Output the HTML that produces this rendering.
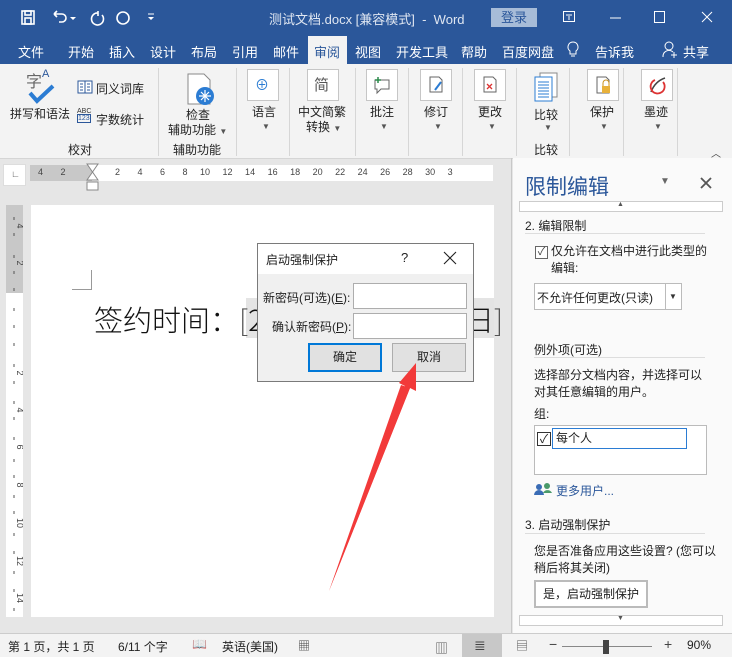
<!DOCTYPE html>
<html><head><meta charset="utf-8"><style>
*{margin:0;padding:0;box-sizing:border-box}
body{width:732px;height:657px;overflow:hidden;position:relative;font-family:"Liberation Sans","Noto Sans CJK SC",sans-serif;font-size:12px;color:#222;background:#e6e6e6}
.a{position:absolute;white-space:nowrap}
.w{color:#fff}
.ib{position:absolute;width:32px;height:32px;border:1px solid #c6c6c6;background:#fff}
.lbl{position:absolute;font-size:12px;text-align:center;white-space:nowrap}
.sep{position:absolute;top:68px;width:1px;height:88px;background:#d6d6d6}
.dd{font-size:8px;color:#555}
</style></head><body>
<div class="a" style="left:0;top:0;width:732px;height:64px;background:#2b579a"></div>
<svg class="a" style="left:20px;top:8px" width="140" height="20"><g fill="none" stroke="#fff" stroke-width="1.6"><rect x="2" y="3" width="12" height="13"/><rect x="5" y="3" width="6" height="4"/><rect x="5" y="10" width="6" height="6"/><path d="M34 6h8a4 4 0 0 1 0 8h-3M34 6l3-3M34 6l3 3"/><path d="M78 5a6 6 0 1 0 4 2M78 3v5"/><circle cx="103" cy="10" r="6"/></g><path d="M50 9l3 3 3-3z M128 9l3 3 3-3z" fill="#fff"/><path d="M128 6h6" stroke="#fff"/></svg>
<div class="a" style="left:269px;top:9px;font-size:13px;color:#dfe6f1">测试文档.docx [兼容模式]&nbsp; - &nbsp;Word</div>
<div class="a" style="left:491px;top:8px;width:46px;height:19px;background:#a7bcd8;color:#2b579a;font-size:13px;text-align:center;line-height:19px">登录</div>
<svg class="a" style="left:560px;top:8px" width="172" height="20"><g fill="none" stroke="#fff" stroke-width="1"><rect x="3.5" y="3.5" width="11" height="10"/><path d="M6 7h6M9 12V8"/><path d="M50 10h11"/><rect x="94.5" y="3.5" width="10" height="11"/><path d="M142 4l10 10M152 4l-10 10"/></g></svg>
<div class="a w" style="left:18px;top:42px;font-size:13px">文件</div>
<div class="a w" style="left:68px;top:42px;font-size:13px">开始</div>
<div class="a w" style="left:109px;top:42px;font-size:13px">插入</div>
<div class="a w" style="left:150px;top:42px;font-size:13px">设计</div>
<div class="a w" style="left:191px;top:42px;font-size:13px">布局</div>
<div class="a w" style="left:232px;top:42px;font-size:13px">引用</div>
<div class="a w" style="left:273px;top:42px;font-size:13px">邮件</div>
<div class="a" style="left:308px;top:36px;width:39px;height:29px;background:#f3f3f3"></div>
<div class="a" style="left:314px;top:42px;font-size:13px;color:#2b579a">审阅</div>
<div class="a w" style="left:355px;top:42px;font-size:13px">视图</div>
<div class="a w" style="left:396px;top:42px;font-size:13px">开发工具</div>
<div class="a w" style="left:461px;top:42px;font-size:13px">帮助</div>
<div class="a w" style="left:502px;top:42px;font-size:13px">百度网盘</div>
<svg class="a" style="left:566px;top:40px" width="14" height="20"><path d="M7 2a5 5 0 0 0-3 9v3h6v-3a5 5 0 0 0-3-9zM5 16h4" fill="none" stroke="#fff"/></svg>
<div class="a w" style="left:595px;top:42px;font-size:13px">告诉我</div>
<svg class="a" style="left:662px;top:40px" width="16" height="20"><circle cx="7" cy="6" r="4" fill="none" stroke="#fff"/><path d="M1 17a6 6 0 0 1 10-5M12 12v6M9 15h6" fill="none" stroke="#fff"/></svg>
<div class="a w" style="left:683px;top:42px;font-size:13px">共享</div>
<div class="a" style="left:0;top:64px;width:732px;height:95px;background:#f3f3f3;border-bottom:1px solid #d5d5d5"></div>
<div class="a" style="left:26px;top:68px;font-size:16px;color:#666">字<span style="font-size:11px;color:#2b579a;vertical-align:top">A</span></div>
<svg class="a" style="left:27px;top:84px" width="30" height="20"><path d="M3 9l7 8L26 2" fill="none" stroke="#2b7cd3" stroke-width="4"/></svg>
<div class="lbl" style="left:10px;top:105px">拼写和语法</div>
<svg class="a" style="left:77px;top:80px" width="16" height="14"><rect x="1" y="1" width="14" height="12" fill="#fff" stroke="#2b579a"/><path d="M8 1v12M3 4h3M3 7h3M3 10h3M10 4h3M10 7h3M10 10h3" stroke="#2b579a"/></svg>
<div class="lbl" style="left:96px;top:80px">同义词库</div>
<div class="a" style="left:77px;top:108px;font-size:7px;color:#333;line-height:7px">ABC<br><span style="border:1px solid #2b579a;color:#2b579a">123</span></div>
<div class="lbl" style="left:96px;top:111px">字数统计</div>
<div class="lbl" style="left:68px;top:141px">校对</div>
<div class="sep" style="left:158px"></div>
<svg class="a" style="left:186px;top:73px" width="32" height="34"><path d="M2 1h16l6 6v24H2z" fill="#fff" stroke="#888"/><circle cx="19" cy="23" r="9" fill="#2b7cd3"/><path d="M19 17v12M13 23h12M15 19l8 8M23 19l-8 8" stroke="#fff" stroke-width="1.2"/></svg>
<div class="lbl" style="left:186px;top:106px">检查</div>
<div class="lbl" style="left:168px;top:121px">辅助功能 <span class="dd">▼</span></div>
<div class="lbl" style="left:173px;top:141px">辅助功能</div>
<div class="sep" style="left:236px"></div>
<div class="ib" style="left:247px;top:69px"></div><div class="a" style="left:255px;top:75px;color:#2b7cd3;font-size:14px">⊕</div>
<div class="lbl" style="left:252px;top:103px">语言</div><div class="lbl dd" style="left:262px;top:122px">▼</div>
<div class="sep" style="left:289px"></div>
<div class="ib" style="left:307px;top:69px"></div><div class="a" style="left:314px;top:74px;color:#555;font-size:15px">简</div>
<div class="lbl" style="left:298px;top:103px">中文简繁</div>
<div class="lbl" style="left:306px;top:118px">转换 <span class="dd">▼</span></div>
<div class="sep" style="left:355px"></div>
<div class="ib" style="left:366px;top:69px"></div><svg class="a" style="left:372px;top:75px" width="20" height="20"><path d="M3 5h14v9H9l-4 4v-4H3z" fill="none" stroke="#666"/><path d="M6 2v6M3 5h6" stroke="#2a8a4a" stroke-width="1.5"/></svg>
<div class="lbl" style="left:370px;top:103px">批注</div><div class="lbl dd" style="left:380px;top:122px">▼</div>
<div class="sep" style="left:408px"></div>
<div class="ib" style="left:420px;top:69px"></div><svg class="a" style="left:427px;top:75px" width="20" height="20"><path d="M3 2h9l3 3v12H3z" fill="none" stroke="#666"/><path d="M14 7l-6 8" stroke="#2b7cd3" stroke-width="2"/></svg>
<div class="lbl" style="left:424px;top:103px">修订</div><div class="lbl dd" style="left:434px;top:122px">▼</div>
<div class="sep" style="left:462px"></div>
<div class="ib" style="left:474px;top:69px"></div><svg class="a" style="left:481px;top:75px" width="20" height="20"><path d="M3 2h9l3 3v12H3z" fill="none" stroke="#666"/><path d="M6 9l5 5M11 9l-5 5" stroke="#d33" stroke-width="1.3"/></svg>
<div class="lbl" style="left:478px;top:103px">更改</div><div class="lbl dd" style="left:488px;top:122px">▼</div>
<div class="sep" style="left:516px"></div>
<svg class="a" style="left:532px;top:72px" width="30" height="32"><rect x="8" y="1" width="17" height="24" fill="#fff" stroke="#888"/><rect x="3" y="5" width="17" height="24" fill="#fff" stroke="#2b7cd3"/><path d="M6 10h11M6 13h11M6 16h11M6 19h11M6 22h11M6 25h11" stroke="#2b7cd3"/></svg>
<div class="lbl" style="left:534px;top:106px">比较</div><div class="lbl dd" style="left:544px;top:123px">▼</div>
<div class="lbl" style="left:534px;top:141px">比较</div>
<div class="sep" style="left:569px"></div>
<div class="ib" style="left:587px;top:69px"></div><svg class="a" style="left:594px;top:75px" width="20" height="22"><path d="M3 2h9l3 3v13H3z" fill="none" stroke="#666"/><rect x="8" y="11" width="8" height="7" fill="#e8b13a"/><path d="M9 11V8a3 3 0 0 1 6 0v3" fill="none" stroke="#c9901a"/></svg>
<div class="lbl" style="left:590px;top:103px">保护</div><div class="lbl dd" style="left:600px;top:122px">▼</div>
<div class="sep" style="left:623px"></div>
<div class="ib" style="left:641px;top:69px"></div><svg class="a" style="left:647px;top:74px" width="22" height="22"><path d="M4 18c3-8 8-12 14-14" fill="none" stroke="#444" stroke-width="1.5"/><path d="M8 6a7 7 0 1 0 8 2" fill="none" stroke="#d33" stroke-width="1.8"/></svg>
<div class="lbl" style="left:644px;top:103px">墨迹</div><div class="lbl dd" style="left:654px;top:122px">▼</div>
<div class="sep" style="left:677px"></div>
<div class="a" style="left:711px;top:145px;font-size:10px;color:#444">︿</div>
<div class="a" style="left:3px;top:164px;width:23px;height:22px;background:#fff;border:1px solid #ddd"></div>
<div class="a" style="left:11px;top:169px;font-size:9px;color:#555">∟</div>
<div class="a" style="left:30px;top:165px;width:463px;height:16px;background:#fff"></div>
<div class="a" style="left:30px;top:165px;width:62px;height:16px;background:#c8c8c8"></div>
<div class="a" style="left:38px;top:167px;font-size:9px;color:#444">4&nbsp;&nbsp;&nbsp;&nbsp;&nbsp;&nbsp;&nbsp;2</div>
<div class="a" style="left:115px;top:167px;font-size:9px;color:#444">2&nbsp;&nbsp;&nbsp;&nbsp;&nbsp;&nbsp;&nbsp;4&nbsp;&nbsp;&nbsp;&nbsp;&nbsp;&nbsp;&nbsp;6&nbsp;&nbsp;&nbsp;&nbsp;&nbsp;&nbsp;&nbsp;8&nbsp;&nbsp;&nbsp;&nbsp;&nbsp;10&nbsp;&nbsp;&nbsp;&nbsp;&nbsp;12&nbsp;&nbsp;&nbsp;&nbsp;&nbsp;14&nbsp;&nbsp;&nbsp;&nbsp;&nbsp;16&nbsp;&nbsp;&nbsp;&nbsp;&nbsp;18&nbsp;&nbsp;&nbsp;&nbsp;&nbsp;20&nbsp;&nbsp;&nbsp;&nbsp;&nbsp;22&nbsp;&nbsp;&nbsp;&nbsp;&nbsp;24&nbsp;&nbsp;&nbsp;&nbsp;&nbsp;26&nbsp;&nbsp;&nbsp;&nbsp;&nbsp;28&nbsp;&nbsp;&nbsp;&nbsp;&nbsp;30&nbsp;&nbsp;&nbsp;&nbsp;&nbsp;3</div>
<svg class="a" style="left:86px;top:163px" width="14" height="28"><path d="M1 1h11L6.5 9zM6.5 9L1 17h11z M1 19h11v8H1z" fill="#fff" stroke="#888"/></svg>
<div class="a" style="left:6px;top:205px;width:17px;height:412px;background:#fff"></div>
<div class="a" style="left:6px;top:205px;width:17px;height:88px;background:#c8c8c8"></div>
<svg class="a" style="left:6px;top:205px" width="17" height="412"><g stroke="#555"><path d="M8 12v3M8 28v3M8 50v3M8 66v3M8 83v3M8 103v3M8 120v3M8 138v3M8 159v3M8 176v3M8 196v3M8 212v3M8 232v3M8 254v3M8 270v3M8 290v3M8 306v3M8 328v3M8 346v3M8 366v3M8 384v3M8 403v3"/></g><g font-size="9" fill="#444" text-anchor="middle" font-family="Liberation Sans"><text transform="translate(11,21) rotate(90)">4</text><text transform="translate(11,58) rotate(90)">2</text><text transform="translate(11,168) rotate(90)">2</text><text transform="translate(11,205) rotate(90)">4</text><text transform="translate(11,242) rotate(90)">6</text><text transform="translate(11,280) rotate(90)">8</text><text transform="translate(11,318) rotate(90)">10</text><text transform="translate(11,356) rotate(90)">12</text><text transform="translate(11,393) rotate(90)">14</text></g></svg>
<div class="a" style="left:31px;top:205px;width:463px;height:412px;background:#fff"></div>
<div class="a" style="left:72px;top:270px;width:20px;height:20px;border-right:1px solid #999;border-bottom:1px solid #999"></div>
<div class="a" style="left:246px;top:298px;width:248px;height:40px;background:#e4e4e4"></div>
<div class="a" style="left:94px;top:298px;font-size:29px;color:#111;font-family:'Noto Sans CJK SC',sans-serif;font-weight:300">签约时间：<span style="color:#555">[</span>2</div>
<div class="a" style="left:465px;top:298px;font-size:29px;color:#111;font-family:'Noto Sans CJK SC',sans-serif;font-weight:300">日<span style="color:#555">]</span></div>
<div class="a" style="left:511px;top:158px;width:1px;height:475px;background:#c8c8c8"></div>
<div class="a" style="left:257px;top:243px;width:217px;height:139px;background:#f0f0f0;border:1px solid #7a7a7a"></div>
<div class="a" style="left:258px;top:244px;width:215px;height:30px;background:#fff"></div>
<div class="a" style="left:266px;top:251px;font-size:12px">启动强制保护</div>
<div class="a" style="left:401px;top:250px;font-size:13px">?</div>
<svg class="a" style="left:443px;top:251px" width="14" height="14"><path d="M1 1l12 12M13 1L1 13" stroke="#222" stroke-width="1.1"/></svg>
<div class="a" style="left:263px;top:289px;font-size:12px">新密码(可选)(<u>E</u>):</div>
<div class="a" style="left:272px;top:318px;font-size:12px">确认新密码(<u>P</u>):</div>
<div class="a" style="left:353px;top:283px;width:114px;height:26px;background:#fff;border:1px solid #adadad"></div>
<div class="a" style="left:353px;top:313px;width:114px;height:26px;background:#fff;border:1px solid #adadad"></div>
<div class="a" style="left:308px;top:343px;width:74px;height:29px;background:#e1e1e1;border:2px solid #0078d7;text-align:center;line-height:25px">确定</div>
<div class="a" style="left:392px;top:343px;width:74px;height:29px;background:#e1e1e1;border:1px solid #adadad;text-align:center;line-height:27px">取消</div>
<svg class="a" style="left:0;top:0" width="732" height="657"><path d="M329 591L405 386 399 383 416 363 416 391 410 388z" fill="#f23a3a"/><path d="M329 591L401 385 410 388z" fill="#f23a3a"/></svg>
<div class="a" style="left:513px;top:158px;width:219px;height:475px;background:#fafafa"></div>
<div class="a" style="left:525px;top:171px;font-size:21px;color:#2b579a">限制编辑</div>
<div class="a" style="left:660px;top:176px;font-size:10px;color:#666">▼</div>
<svg class="a" style="left:700px;top:177px" width="12" height="12"><path d="M1 1l10 10M11 1L1 11" stroke="#555" stroke-width="1.8"/></svg>
<div class="a" style="left:519px;top:201px;width:204px;height:11px;background:#fff;border:1px solid #ccc"></div>
<div class="a" style="left:617px;top:201px;font-size:7px;color:#555">▲</div>
<div class="a" style="left:525px;top:217px;font-size:12px">2. 编辑限制</div>
<div class="a" style="left:525px;top:233px;width:180px;height:1px;background:#ddd"></div>
<div class="a" style="left:535px;top:246px;width:13px;height:13px;border:1px solid #666;background:#fff;font-size:11px;line-height:11px;color:#444;text-align:center">✓</div>
<div class="a" style="left:551px;top:243px;font-size:12px;line-height:17px">仅允许在文档中进行此类型的<br>编辑:</div>
<div class="a" style="left:534px;top:283px;width:148px;height:27px;background:#fff;border:1px solid #bbb"></div>
<div class="a" style="left:665px;top:283px;width:1px;height:27px;background:#bbb"></div>
<div class="a" style="left:537px;top:289px;font-size:12px">不允许任何更改(只读)</div>
<div class="a" style="left:669px;top:292px;font-size:8px;color:#333">▼</div>
<div class="a" style="left:534px;top:341px;font-size:12px">例外项(可选)</div>
<div class="a" style="left:534px;top:357px;width:171px;height:1px;background:#ddd"></div>
<div class="a" style="left:534px;top:367px;font-size:12px;line-height:17px">选择部分文档内容，并选择可以<br>对其任意编辑的用户。</div>
<div class="a" style="left:534px;top:405px;font-size:12px">组:</div>
<div class="a" style="left:534px;top:425px;width:173px;height:50px;background:#fff;border:1px solid #bbb"></div>
<div class="a" style="left:537px;top:432px;width:14px;height:14px;border:1px solid #333;font-size:12px;line-height:12px;text-align:center">✓</div>
<div class="a" style="left:552px;top:428px;width:135px;height:21px;border:1px solid #2b7cd3;background:#fff;padding-left:3px;line-height:19px">每个人</div>
<svg class="a" style="left:534px;top:483px" width="18" height="12"><circle cx="5" cy="4" r="3" fill="#3a6cb5"/><path d="M0 12a5 5 0 0 1 10 0z" fill="#3a6cb5"/><circle cx="13" cy="3" r="3" fill="#4a9a6a"/><path d="M9 10a5 5 0 0 1 9 0z" fill="#4a9a6a"/></svg>
<div class="a" style="left:556px;top:482px;font-size:12px;color:#2b579a">更多用户...</div>
<div class="a" style="left:525px;top:516px;font-size:12px">3. 启动强制保护</div>
<div class="a" style="left:525px;top:533px;width:180px;height:1px;background:#ddd"></div>
<div class="a" style="left:534px;top:543px;font-size:12px;line-height:17px">您是否准备应用这些设置? (您可以<br>稍后将其关闭)</div>
<div class="a" style="left:534px;top:580px;width:114px;height:28px;background:#fff;border:2px solid #bbb;padding-left:7px;line-height:24px">是，启动强制保护</div>
<div class="a" style="left:519px;top:615px;width:204px;height:11px;background:#fff;border:1px solid #ccc"></div>
<div class="a" style="left:617px;top:615px;font-size:7px;color:#555">▼</div>
<div class="a" style="left:0;top:633px;width:732px;height:24px;background:#f3f3f3;border-top:1px solid #ccc"></div>
<div class="a" style="left:8px;top:638px;font-size:12px">第 1 页，共 1 页</div>
<div class="a" style="left:118px;top:638px;font-size:12px">6/11 个字</div>
<div class="a" style="left:192px;top:637px;font-size:12px;color:#555">📖</div>
<div class="a" style="left:222px;top:638px;font-size:12px">英语(美国)</div>
<div class="a" style="left:298px;top:637px;font-size:12px;color:#444">▦</div>
<div class="a" style="left:435px;top:638px;font-size:13px;color:#555">▥</div>
<div class="a" style="left:462px;top:634px;width:40px;height:23px;background:#c8c8c8"></div>
<div class="a" style="left:474px;top:637px;font-size:14px;color:#444">≣</div>
<div class="a" style="left:516px;top:637px;font-size:12px;color:#555">▤</div>
<div class="a" style="left:549px;top:636px;font-size:14px;color:#444">−</div>
<div class="a" style="left:562px;top:646px;width:90px;height:1px;background:#888"></div>
<div class="a" style="left:603px;top:640px;width:6px;height:14px;background:#444"></div>
<div class="a" style="left:664px;top:636px;font-size:14px;color:#444">+</div>
<div class="a" style="left:687px;top:638px;font-size:12px">90%</div>
</body></html>
